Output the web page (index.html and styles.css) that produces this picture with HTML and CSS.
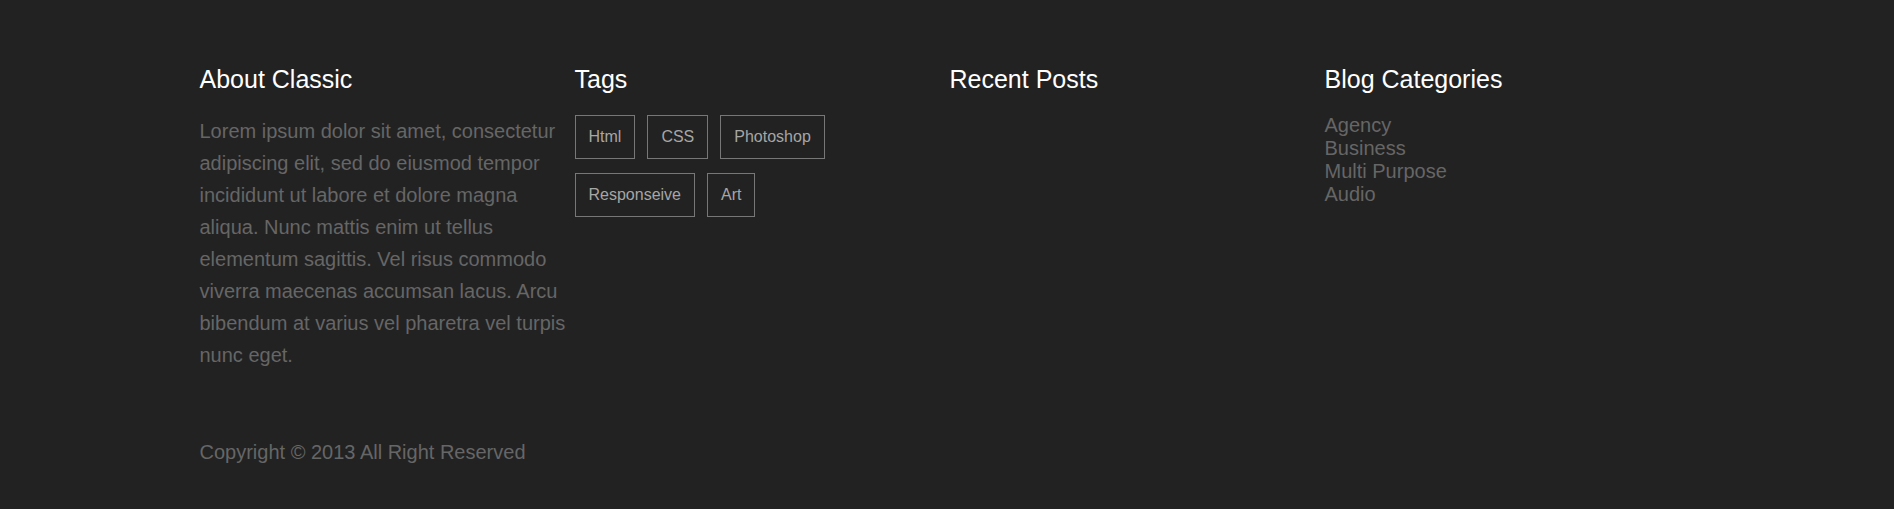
FILE: index.html
```html
<!DOCTYPE html>
<html lang="en">
<head>
<meta charset="utf-8">
<title>Footer</title>
<link rel="stylesheet" href="styles.css">
</head>
<body>
<footer class="footer">
  <div class="container">
    <div class="widgets">
      <section class="widget">
        <h3 class="widget-title">About Classic</h3>
        <p class="about-text">Lorem ipsum dolor sit amet, consectetur adipiscing elit, sed do eiusmod tempor incididunt ut labore et dolore magna aliqua. Nunc mattis enim ut tellus elementum sagittis. Vel risus commodo viverra maecenas accumsan lacus. Arcu bibendum at varius vel pharetra vel turpis nunc eget.</p>
      </section>
      <section class="widget">
        <h3 class="widget-title">Tags</h3>
        <div class="tags">
          <a class="tag" href="#">Html</a>
          <a class="tag" href="#">CSS</a>
          <a class="tag" href="#">Photoshop</a>
          <a class="tag" href="#">Responseive</a>
          <a class="tag" href="#">Art</a>
        </div>
      </section>
      <section class="widget">
        <h3 class="widget-title">Recent Posts</h3>
      </section>
      <section class="widget">
        <h3 class="widget-title">Blog Categories</h3>
        <ul class="categories">
          <li><a href="#">Agency</a></li>
          <li><a href="#">Business</a></li>
          <li><a href="#">Multi Purpose</a></li>
          <li><a href="#">Audio</a></li>
        </ul>
      </section>
    </div>
    <p class="copyright">Copyright © 2013 All Right Reserved</p>
  </div>
</footer>
</body>
</html>
```
FILE: styles.css
```css
* { box-sizing: border-box; }
html, body {
  margin: 0;
  padding: 0;
  background: #222222;
}
body {
  font-family: "Liberation Sans", Arial, sans-serif;
  color: #666666;
}
.footer {
  background: #222222;
  padding: 64px 0 46px;
}
.container {
  width: 1505px;
  padding-left: 5px;
  margin: 0 auto;
}
.widgets {
  display: grid;
  grid-template-columns: repeat(4, 375px);
}
.widget-title {
  margin: 0 0 21px;
  font-size: 25px;
  line-height: 30px;
  font-weight: 400;
  color: #ffffff;
}
.about-text {
  margin: 0;
  font-size: 20px;
  line-height: 32px;
  color: #666666;
}
.tags {
  display: flex;
  flex-wrap: wrap;
  gap: 14px 12px;
  width: 300px;
}
.tag {
  display: block;
  padding: 10px 13px;
  border: 1px solid #777777;
  font-size: 16px;
  line-height: 22px;
  color: #a6a6a6;
  text-decoration: none;
}
.categories {
  list-style: none;
  margin: -1px 0 0;
  padding: 0;
  font-size: 20px;
  line-height: 23px;
}
.categories a {
  color: #666666;
  text-decoration: none;
}
.copyright {
  margin: 70px 0 0;
  font-size: 20px;
  line-height: 23px;
  color: #666666;
}
```
